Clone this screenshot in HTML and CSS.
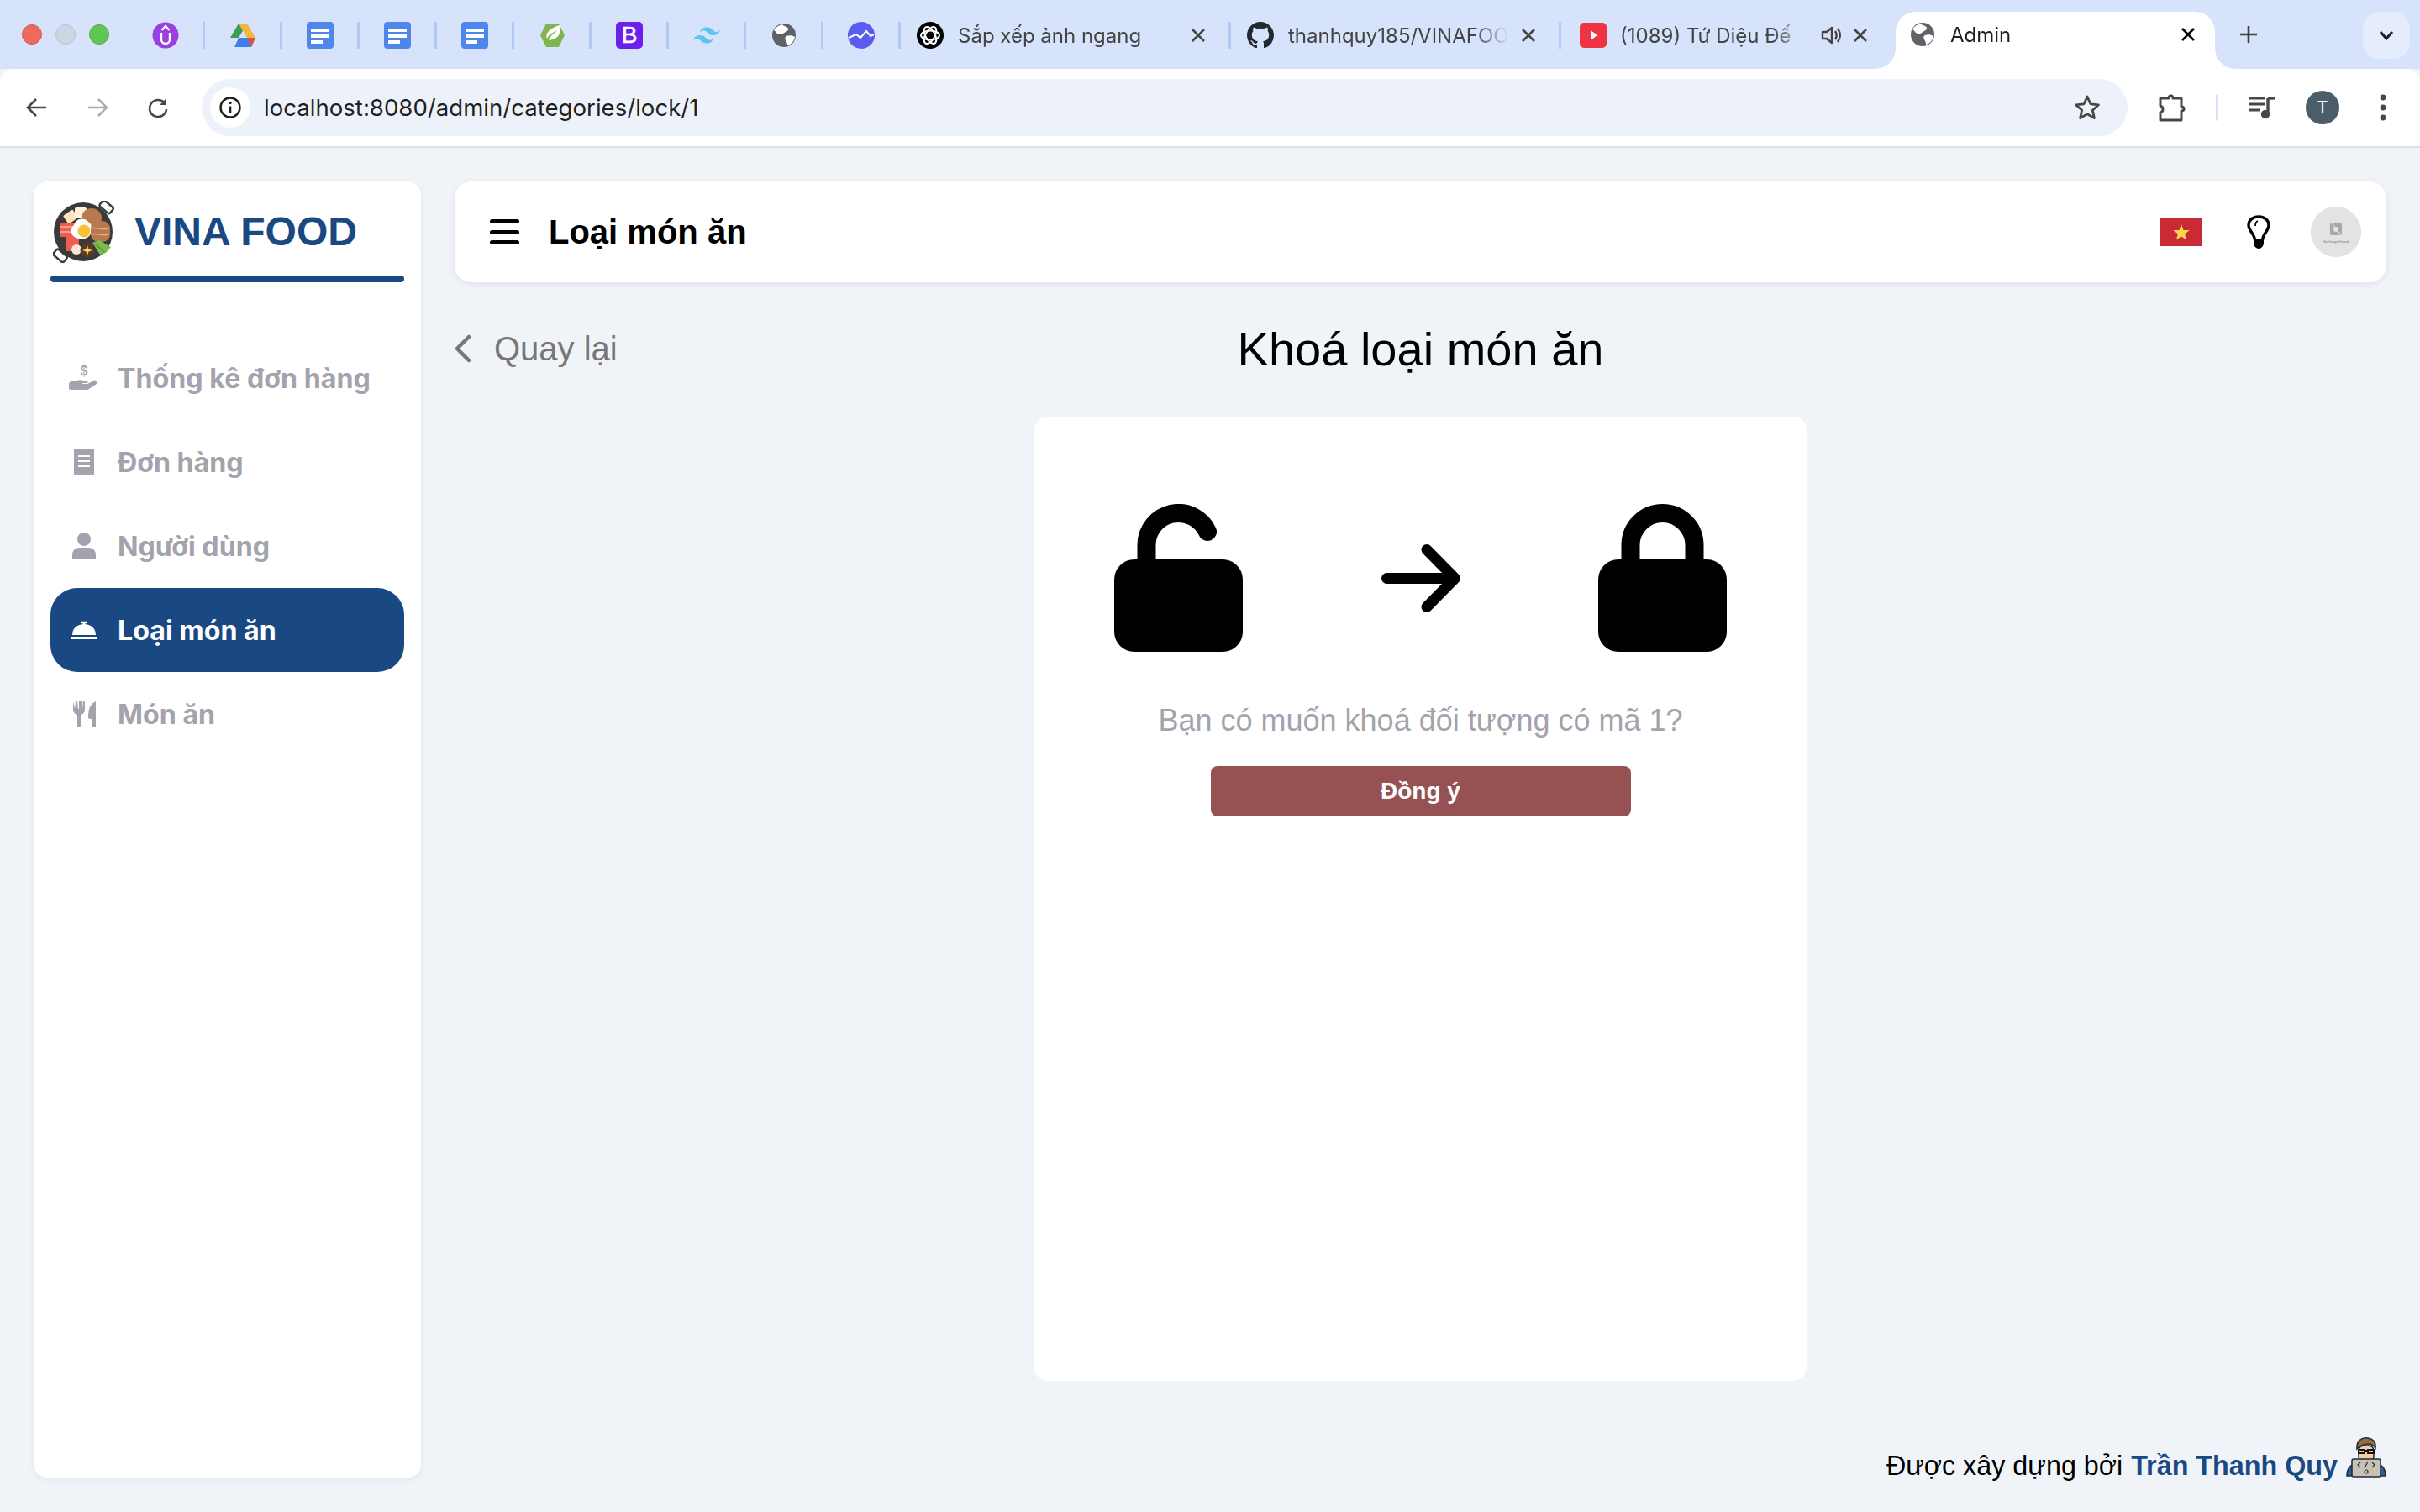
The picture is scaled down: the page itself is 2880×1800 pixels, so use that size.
FILE: index.html
```html
<!DOCTYPE html>
<html lang="vi">
<head>
    <meta charset="UTF-8">
    <meta name="viewport" content="width=device-width, initial-scale=1.0">
    <title>Admin</title>
    <link rel="stylesheet" href="styles.css">
</head>
<body>
    <svg class="defs" width="0" height="0">
        <symbol id="doc" viewBox="0 0 32 32">
            <rect width="32" height="32" rx="4" fill="#4f86ec"/>
            <rect x="5" y="8" width="22" height="4" fill="#fff"/>
            <rect x="5" y="15" width="22" height="4" fill="#fff"/>
            <rect x="5" y="22" width="14" height="4" fill="#fff"/>
        </symbol>
        <symbol id="globe" viewBox="0 0 32 32">
            <circle cx="16" cy="16" r="14" fill="#5f6368"/>
            <path d="M14 3c2 3 6 2 7 5s-4 4-6 6-7 1-8-1-3-3-3-3c2-4 6-6 10-7zM19 17c3-1 7-1 10 1-1 5-4 9-9 10 0-3-1-4-2-6s-1-4 1-5z" fill="#fff"/>
        </symbol>
        <symbol id="close" viewBox="0 0 20 20">
            <path d="M3 3l14 14M17 3L3 17" fill="none" stroke="currentColor" stroke-width="2.6"/>
        </symbol>
    </svg>

    <div class="browser">
        <div class="tabstrip">
            <div class="traffic">
                <span class="light light-red"></span>
                <span class="light light-gray"></span>
                <span class="light light-green"></span>
            </div>
            <div class="pin">
                <svg class="favicon" viewBox="0 0 32 32"><circle cx="16" cy="16" r="15.500" fill="#9a3fe0"/><path d="M11 13v8a5 5 0 0 0 10 0v-8" fill="none" stroke="#fff" stroke-width="2.400"/><path d="M11.500 10L16 5l4.500 5" fill="none" stroke="#fff" stroke-width="2.400"/></svg>
            </div>
            <div class="pin">
                <svg class="favicon" viewBox="0 0 32 32"><path d="M11 2h10L11 19H1z" fill="#3b9b57"/><path d="M21 2l10 17H21L11 2z" fill="#f4b63d"/><path d="M6 30l5-11h20l-5 11z" fill="#3f7fe8"/><path d="M26 30l-5-11h10z" fill="#dd5340"/></svg>
            </div>
            <div class="pin"><svg class="favicon"><use href="#doc"/></svg></div>
            <div class="pin"><svg class="favicon"><use href="#doc"/></svg></div>
            <div class="pin"><svg class="favicon"><use href="#doc"/></svg></div>
            <div class="pin">
                <svg class="favicon" viewBox="0 0 32 32"><path d="M9 2h15l7 14-7 14H9L2 16z" fill="#7fb550"/><path d="M25 4c2 9-1 17-13 18 2-6 7-8 10-12-5 3-10 5-12 10C7 14 14 7 25 4z" fill="#fff"/></svg>
            </div>
            <div class="pin">
                <svg class="favicon" viewBox="0 0 32 32"><rect width="32" height="32" rx="5" fill="#6a20ec"/><text x="16" y="25" class="favicon-b">B</text></svg>
            </div>
            <div class="pin">
                <svg class="favicon" viewBox="2 2 20 20"><path d="M12 6c-2.670 0-4.330 1.330-5 4 1-1.330 2.170-1.830 3.500-1.500.761.190 1.305.742 1.906 1.351C13.387 10.848 14.522 12 17 12c2.670 0 4.330-1.330 5-4-1 1.330-2.170 1.830-3.500 1.500-.761-.190-1.305-.742-1.906-1.351C15.613 7.152 14.478 6 12 6zM7 12c-2.670 0-4.330 1.330-5 4 1-1.330 2.170-1.830 3.500-1.500.761.190 1.305.743 1.906 1.351C8.387 16.848 9.522 18 12 18c2.670 0 4.330-1.330 5-4-1 1.330-2.170 1.830-3.500 1.500-.761-.190-1.305-.742-1.906-1.351C10.613 13.152 9.478 12 7 12z" fill="#5cc3f3"/></svg>
            </div>
            <div class="pin"><svg class="favicon"><use href="#globe"/></svg></div>
            <div class="pin">
                <svg class="favicon" viewBox="0 0 32 32"><circle cx="16" cy="16" r="16" fill="#5a5cf0"/><path d="M1 19l9-4 5 4 7-8 5 6 4-2" fill="none" stroke="#fff" stroke-width="2"/></svg>
            </div>

            <div class="tab tab-sep">
                <svg class="favicon" viewBox="0 0 32 32"><circle cx="16" cy="16" r="16"/><g fill="none" stroke="#fff" stroke-width="2"><ellipse cx="16" cy="16" rx="11" ry="5.500"/><ellipse cx="16" cy="16" rx="11" ry="5.500" transform="rotate(60 16 16)"/><ellipse cx="16" cy="16" rx="11" ry="5.500" transform="rotate(120 16 16)"/></g></svg>
                <span class="tab-title">Sắp xếp ảnh ngang</span>
                <svg class="tab-close"><use href="#close"/></svg>
            </div>
            <div class="tab tab-sep">
                <svg class="favicon" viewBox="0 0 16 16"><path fill="#24292f" d="M8 0C3.580 0 0 3.580 0 8c0 3.540 2.290 6.530 5.470 7.590.4.070.55-.17.55-.38v-1.340c-2.230.48-2.700-1.070-2.700-1.070-.36-.92-.89-1.170-.89-1.170-.73-.5.05-.49.05-.49.800.06 1.230.83 1.230.83.710 1.220 1.870.87 2.330.66.070-.52.280-.87.510-1.070-1.780-.2-3.640-.89-3.640-3.950 0-.870.310-1.590.820-2.150-.08-.2-.36-1.020.08-2.120 0 0 .67-.21 2.200.82a7.600 7.600 0 0 1 4 0c1.530-1.040 2.200-.82 2.200-.82.440 1.100.160 1.920.080 2.120.51.560.820 1.270.820 2.150 0 3.070-1.870 3.750-3.650 3.950.290.250.54.730.54 1.480v2.200c0 .210.150.460.550.380A8 8 0 0 0 16 8c0-4.420-3.580-8-8-8z"/></svg>
                <span class="tab-title">thanhquy185/VINAFOOD</span>
                <svg class="tab-close"><use href="#close"/></svg>
            </div>
            <div class="tab tab-yt">
                <svg class="favicon" viewBox="0 0 32 32"><rect y="1" width="32" height="30" rx="5" fill="#ee3344"/><path d="M13 10l8 6-8 6z" fill="#fff"/></svg>
                <span class="tab-title">(1089) Tứ Diệu Đế</span>
                <svg class="tab-sound" viewBox="0 0 26 26"><path d="M3 9v8h5l6 5V4L8 9z" fill="none" stroke="#444" stroke-width="2.400" stroke-linejoin="round"/><path d="M18 8c2 3 2 7 0 10M21 5c3.500 5 3.500 11 0 16" fill="none" stroke="#444" stroke-width="2.400"/></svg>
                <svg class="tab-close"><use href="#close"/></svg>
            </div>
            <div class="tab tab-active">
                <svg class="favicon"><use href="#globe"/></svg>
                <span class="tab-title">Admin</span>
                <svg class="tab-close"><use href="#close"/></svg>
            </div>
            <svg class="newtab" viewBox="0 0 22 22"><path d="M11 1v20M1 11h20" fill="none" stroke="#3c4043" stroke-width="2.600"/></svg>
            <div class="tabmenu">
                <svg viewBox="0 0 18 12" width="18" height="12"><path d="M2 2l7 8 7-8" fill="none" stroke="#1f1f1f" stroke-width="3"/></svg>
            </div>
        </div>

        <div class="toolbar">
            <div class="tool">
                <svg viewBox="0 0 26 26" width="26" height="26"><path d="M24 13H3M12 3L2 13l10 10" fill="none" stroke="#474747" stroke-width="2.600"/></svg>
            </div>
            <div class="tool">
                <svg viewBox="0 0 26 26" width="26" height="26"><path d="M2 13h21M14 3l10 10-10 10" fill="none" stroke="#adadad" stroke-width="2.600"/></svg>
            </div>
            <div class="tool">
                <svg viewBox="0 0 26 26" width="26" height="26"><path d="M21 8a10 10 0 1 0 2 7" fill="none" stroke="#474747" stroke-width="2.600"/><path d="M23 2v8h-8z" fill="#474747"/></svg>
            </div>
            <div class="omnibox">
                <span class="site-info">
                    <svg viewBox="0 0 28 28" width="28" height="28"><circle cx="14" cy="14" r="11.500" fill="none" stroke="#1f1f1f" stroke-width="2.400"/><path d="M14 12.500v8" stroke="#1f1f1f" stroke-width="2.600"/><circle cx="14" cy="8.500" r="1.700" fill="#1f1f1f"/></svg>
                </span>
                <span class="url">localhost:8080/admin/categories/lock/1</span>
                <svg class="star" viewBox="0 0 32 32"><path d="M16 3l3.900 8.800 9.600 1-7.200 6.400 2.100 9.400L16 23.700l-8.400 4.900 2.100-9.400L2.500 12.800l9.600-1z" fill="none" stroke="#474747" stroke-width="2.800" stroke-linejoin="round"/></svg>
            </div>
            <div class="tool tool-ext">
                <svg viewBox="0 0 34 34" width="34" height="34"><path d="M3 6h10c0-4 5-4 5 0h10v10c4 0 4 5 0 5v11H3v-9c4-1 4-7 0-8z" fill="none" stroke="#474747" stroke-width="3" stroke-linejoin="round"/></svg>
            </div>
            <span class="tool-sep"></span>
            <div class="tool">
                <svg viewBox="0 0 32 32" width="32" height="32"><path d="M1 5h19M1 12h19M1 19h12" stroke="#474747" stroke-width="3"/><path d="M23 5v19" stroke="#474747" stroke-width="3.400"/><path d="M23 5h8" stroke="#474747" stroke-width="3.400"/><circle cx="20" cy="24" r="5.200" fill="#474747"/></svg>
            </div>
            <div class="tool"><span class="profile">T</span></div>
            <div class="tool">
                <svg viewBox="0 0 8 32" width="8" height="32"><circle cx="4" cy="4" r="3.400" fill="#474747"/><circle cx="4" cy="16" r="3.400" fill="#474747"/><circle cx="4" cy="28" r="3.400" fill="#474747"/></svg>
            </div>
        </div>
    </div>

    <div class="page">
        <aside class="sidebar">
            <div class="brand">
                <svg class="brand-logo" viewBox="0 0 74 74">
                    <g fill="#fff" stroke="#3a3a3a" stroke-width="2.500">
                        <rect x="56" y="3" width="16" height="9" rx="2.500" transform="rotate(40 64 7)"/>
                        <rect x="1" y="61" width="16" height="9" rx="2.500" transform="rotate(40 9 65)"/>
                    </g>
                    <circle cx="36" cy="37" r="35" fill="#3a3a3a"/>
                    <rect x="14" y="13" width="14" height="12" rx="2" fill="#fde3bd" transform="rotate(-35 21 19)"/>
                    <rect x="26" y="8" width="14" height="13" rx="2" fill="#fff0d8"/>
                    <ellipse cx="46" cy="20" rx="12" ry="11" fill="#b9794f"/>
                    <rect x="8" y="27" width="19" height="16" rx="2" fill="#ef5d50"/>
                    <rect x="16" y="42" width="15" height="18" rx="1" fill="#ef5d50"/>
                    <path d="M9 31h17M9 37h17" stroke="#fbb3a6" stroke-width="1.500"/>
                    <path d="M27 44c-7-3-6-12-2-15 2-8 12-10 17-4 6 3 5 13 2 16-5 6-12 5-17 3z" fill="#fff"/>
                    <circle cx="37" cy="36" r="7.500" fill="#f7c332"/>
                    <rect x="45" y="24" width="23" height="25" rx="9" fill="#b9794f"/>
                    <path d="M47 33c5-2 8 2 19 0M47 40c5-2 8 2 19 0" fill="none" stroke="#e3b999" stroke-width="1.500"/>
                    <path d="M47 50l8-3 14 8-6 7-7 2z" fill="#7dbb4d"/>
                    <path d="M50 51l11 10" stroke="#4f9437" stroke-width="1.500"/>
                    <circle cx="28" cy="58" r="6" fill="#fde6d5"/>
                    <circle cx="41" cy="59" r="8.500" fill="#5a3a25"/>
                    <path d="M41 53l1.500 4.500L47 59l-4.500 1.500L41 65l-1.500-4.500L35 59l4.500-1.500z" fill="#f8d65c"/>
                </svg>
                <span class="brand-name">VINA FOOD</span>
            </div>
            <div class="brand-line"></div>
            <nav class="menu">
                <a class="menu-item">
                    <span class="menu-icon">
                        <svg viewBox="0 0 36 32" width="36" height="32"><text x="18" y="13" class="dollar">$</text><path d="M0 23c0-2 2-3 4-3h5c2-2 5-2 7-1h5c2 0 2 3 0 3h-5v1h6l8-4c3-1 5 2 3 4l-9 6c-1 1-2 1-3 1H3c-2 0-3-1-3-2z" fill="currentColor"/></svg>
                    </span>
                    Thống kê đơn hàng
                </a>
                <a class="menu-item">
                    <span class="menu-icon">
                        <svg viewBox="0 0 24 32" width="24" height="32"><path d="M0 0l3 1.500L6 0l3 1.500L12 0l3 1.500L18 0l3 1.500L24 0v32l-3-1.500-3 1.500-3-1.500-3 1.500-3-1.500L6 32l-3-1.500L0 32z" fill="currentColor"/><path d="M5 9h14M5 15h14M5 21h14" stroke="#fff" stroke-width="2"/></svg>
                    </span>
                    Đơn hàng
                </a>
                <a class="menu-item">
                    <span class="menu-icon">
                        <svg viewBox="0 0 28 32" width="28" height="32"><circle cx="14" cy="8" r="8" fill="currentColor"/><path d="M0 32v-5c0-6 4-9 9-9h10c5 0 9 3 9 9v5z" fill="currentColor"/></svg>
                    </span>
                    Người dùng
                </a>
                <a class="menu-item menu-item-active">
                    <span class="menu-icon">
                        <svg viewBox="0 0 32 24" width="32" height="24"><path d="M12 3h8M16 3v3" stroke="currentColor" stroke-width="2.500"/><path d="M2 18C2 10 8 5 16 5s14 5 14 13z" fill="currentColor"/><rect y="20" width="32" height="3" rx="1" fill="currentColor"/></svg>
                    </span>
                    Loại món ăn
                </a>
                <a class="menu-item">
                    <span class="menu-icon">
                        <svg viewBox="0 0 28 32" width="28" height="32"><path d="M1 1v10c0 3 2 5 5 6v13c0 2 4 2 4 0V17c3-1 5-3 5-6V1h-2l-1 9h-1V1h-3v9H7L6 1H4L3 10z" fill="currentColor"/><path d="M28 1v30c0 1-4 1-4 0v-9h-3c-1 0-2-1-2-2 0-9 2-16 9-19z" fill="currentColor"/></svg>
                    </span>
                    Món ăn
                </a>
            </nav>
        </aside>

        <main class="main">
            <header class="topbar">
                <div class="hamburger"><span></span><span></span><span></span></div>
                <h2 class="topbar-title">Loại món ăn</h2>
                <svg class="flag" viewBox="0 0 50 34"><rect width="50" height="34" fill="#c92a33"/><path d="M25 8l2.500 7 7.300.1-5.800 4.500 2.100 7-6.100-4.200-6.100 4.200 2.100-7-5.800-4.500 7.300-.1z" fill="#f8d94a"/></svg>
                <svg class="bulb" viewBox="0 0 28 40"><path d="M9.500 30C9 22 2 19 2 12 2 5.500 7.500 2 14 2s12 3.500 12 10c0 7-7 10-7.500 18z" fill="none" stroke="#000" stroke-width="3.400" stroke-linejoin="round"/><path d="M8 31h12v2c0 4-3 7-6 7s-6-3-6-7z" fill="#000"/><path d="M13 7c-2 1-3 3-3 6" fill="none" stroke="#000" stroke-width="1.800"/></svg>
                <div class="user-avatar">
                    <svg viewBox="0 0 16 18" width="16" height="18"><rect x="1" y="2" width="14" height="15" rx="2" fill="#a8a8a8"/><circle cx="8" cy="10" r="3" fill="#e3e3e3"/><path d="M2 1l12 16" stroke="#e3e3e3" stroke-width="1.200"/></svg>
                    <span class="user-avatar-text">No Image Found</span>
                </div>
            </header>

            <div class="title-row">
                <a class="back">
                    <svg viewBox="0 0 20 34" width="20" height="34"><path d="M17 3L3 17l14 14" fill="none" stroke="#777" stroke-width="4.500" stroke-linecap="round" stroke-linejoin="round"/></svg>
                    <span>Quay lại</span>
                </a>
                <h1 class="page-title">Khoá loại món ăn</h1>
                <span></span>
            </div>

            <section class="card">
                <div class="lock-row">
                    <svg class="lock" viewBox="0 0 153 176"><path d="M38.500 72V49a38 38 0 0 1 72.500-16" fill="none" stroke="#000" stroke-width="22" stroke-linecap="round"/><rect y="66" width="153" height="110" rx="24"/></svg>
                    <svg class="arrow" viewBox="0 0 94 81"><path d="M6.500 40.500H87M54 6.500l33.500 34L54 74.500" fill="none" stroke="#000" stroke-width="13" stroke-linecap="round" stroke-linejoin="round"/></svg>
                    <svg class="lock" viewBox="0 0 153 176"><path d="M38.500 72V49a38 38 0 0 1 76 0v23" fill="none" stroke="#000" stroke-width="22"/><rect y="66" width="153" height="110" rx="24"/></svg>
                </div>
                <p class="question">Bạn có muốn khoá đối tượng có mã 1?</p>
                <button class="confirm">Đồng ý</button>
            </section>

            <footer class="credit">
                <span>Được xây dựng bởi</span>
                <strong>Trần Thanh Quy</strong>
                <svg class="credit-icon" viewBox="0 0 48 48">
                    <path d="M1 46c0-10 5-14 13-15h20c8 1 13 5 13 15z" fill="#2f5d95" stroke="#1d2b3a" stroke-width="1.500"/>
                    <rect x="15" y="10" width="18" height="19" rx="6" fill="#f3cba6" stroke="#1d2b3a" stroke-width="1.500"/>
                    <path d="M13 14C12 4 19 0 26 1c6 1 10 4 9 12-2-3-5-5-9-5-5 0-9 2-13 6z" fill="#9a6b3f" stroke="#1d2b3a" stroke-width="1.500"/>
                    <path d="M15 15h7v4h-7zM26 15h7v4h-7zM22 16h4" fill="none" stroke="#111" stroke-width="1.800"/>
                    <rect x="7" y="26" width="34" height="21" rx="2" fill="#c9c2b4" stroke="#1d2b3a" stroke-width="1.500"/>
                    <path d="M17 30l-3 3 3 3M31 30l3 3-3 3M26 29l-4 8" fill="none" stroke="#1d2b3a" stroke-width="1.200"/>
                    <circle cx="24" cy="41" r="2" fill="none" stroke="#1d2b3a" stroke-width="1.200"/>
                </svg>
            </footer>
        </main>
    </div>
</body>
</html>
```

FILE: styles.css
```css
* {
    margin: 0;
    padding: 0;
    box-sizing: border-box;
}
body {
    display: flex;
    flex-direction: column;
    height: 100vh;
    overflow: hidden;
    background: #f0f4f9;
    font-family: "Liberation Sans", Arial, sans-serif;
    color: #000;
}
.defs {
    position: absolute;
}

/* browser chrome */
.tabstrip {
    display: flex;
    align-items: flex-end;
    height: 82px;
    background: #d6e3fa;
    font-family: Inter, "Noto Sans", sans-serif;
}
.traffic {
    display: flex;
    align-items: center;
    gap: 16px;
    width: 152px;
    height: 82px;
    padding-left: 26px;
}
.light {
    width: 24px;
    height: 24px;
    border-radius: 50%;
}
.light-red { background: #ed6a5e; border: 1px solid #d8574c; }
.light-gray { background: #ced6e3; border: 1px solid #b9c1ce; }
.light-green { background: #61c554; border: 1px solid #53ad47; }
.pin {
    display: flex;
    align-items: center;
    justify-content: center;
    width: 92px;
    height: 32px;
    margin-bottom: 24px;
    border-right: 3px solid #b2c9f3;
}
.favicon {
    flex: none;
    width: 32px;
    height: 32px;
}
.favicon-b {
    font-family: "Liberation Sans", sans-serif;
    font-size: 28px;
    font-weight: 400;
    fill: #fff;
    stroke: #fff;
    stroke-width: 0.6px;
    text-anchor: middle;
}
.tab {
    position: relative;
    display: flex;
    align-items: center;
    height: 32px;
    margin-bottom: 24px;
    padding-left: 19px;
    color: #444;
    font-size: 24px;
}
.tab-sep {
    width: 393px;
    padding-right: 26px;
    border-right: 3px solid #b2c9f3;
}
.tab-yt {
    width: 398px;
    padding-left: 22px;
    padding-right: 32px;
}
.tab-title {
    flex: 1;
    min-width: 0;
    margin-left: 17px;
    white-space: nowrap;
    overflow: hidden;
    -webkit-mask-image: linear-gradient(to right, #000 calc(100% - 40px), transparent);
    mask-image: linear-gradient(to right, #000 calc(100% - 40px), transparent);
}
.tab-yt .tab-title {
    margin-left: 16px;
}
.tab-close {
    flex: none;
    width: 20px;
    height: 20px;
    margin-left: 14px;
    color: #444;
}
.tab-sound {
    flex: none;
    width: 26px;
    height: 26px;
    margin-left: 16px;
}
.tab-yt .tab-close {
    margin-left: 12px;
}
.tab-active {
    width: 380px;
    height: 68px;
    margin-bottom: 0;
    padding: 0 22px 14px 16px;
    background: #fff;
    border-radius: 24px 24px 0 0;
    color: #1f1f1f;
}
.tab-active .tab-close {
    color: #000;
}
.tab-active::before,
.tab-active::after {
    content: "";
    position: absolute;
    bottom: 0;
    width: 24px;
    height: 24px;
}
.tab-active::before {
    left: -24px;
    background: radial-gradient(circle at 0 0, transparent 23.5px, #fff 24px);
}
.tab-active::after {
    right: -24px;
    background: radial-gradient(circle at 100% 0, transparent 23.5px, #fff 24px);
}
.newtab {
    width: 22px;
    height: 22px;
    margin: 0 0 30px 29px;
}
.tabmenu {
    display: flex;
    align-items: center;
    justify-content: center;
    width: 56px;
    height: 56px;
    margin: 0 0 12px 125px;
    background: #e5edfc;
    border-radius: 20px;
}
.toolbar {
    display: flex;
    align-items: center;
    height: 94px;
    padding: 0 8px;
    background: #fff;
    border-bottom: 2px solid #e1e1e1;
    border-radius: 16px 16px 0 0;
}
.tool {
    display: flex;
    flex: none;
    align-items: center;
    justify-content: center;
    width: 72px;
    height: 72px;
}
.tool-ext {
    margin-left: 17px;
}
.tool-sep {
    flex: none;
    width: 3px;
    height: 32px;
    margin: 0 16px;
    background: #d6e3fa;
    border-radius: 2px;
}
.omnibox {
    display: flex;
    flex: 1;
    align-items: center;
    height: 68px;
    margin-left: 16px;
    padding: 0 32px 0 10px;
    background: #edf2fa;
    border-radius: 34px;
}
.site-info {
    display: flex;
    align-items: center;
    justify-content: center;
    width: 48px;
    height: 48px;
    background: #fff;
    border-radius: 50%;
}
.url {
    flex: 1;
    margin-left: 16px;
    color: #1f1f1f;
    font-family: Inter, "Noto Sans", sans-serif;
    font-size: 27.6px;
}
.star {
    width: 32px;
    height: 32px;
}
.profile {
    display: flex;
    align-items: center;
    justify-content: center;
    width: 40px;
    height: 40px;
    background: #4a5d68;
    border-radius: 50%;
    color: #fff;
    font-family: Inter, "Noto Sans", sans-serif;
    font-size: 20px;
}

/* page */
.page {
    display: flex;
    flex: 1;
    gap: 40px;
    min-height: 0;
    padding: 40px 40px 41px;
}
.sidebar {
    flex: none;
    width: 461px;
    padding: 23px 20px 0;
    background: #fff;
    border-radius: 16px;
    box-shadow: 0 2px 8px rgba(0, 0, 0, 0.06);
}
.brand {
    display: flex;
    align-items: center;
    gap: 23px;
    padding-left: 3px;
}
.brand-logo {
    width: 74px;
    height: 74px;
}
.brand-name {
    margin-top: -2px;
    color: #1a4882;
    font-size: 48px;
    font-weight: 700;
}
.brand-line {
    height: 8px;
    margin-top: 15px;
    background: #1a4882;
    border-radius: 4px;
}
.menu {
    margin-top: 64px;
}
.menu-item {
    display: flex;
    align-items: center;
    gap: 16px;
    height: 100px;
    padding-left: 16px;
    color: #a3a3ae;
    font-family: Inter, "Noto Sans", sans-serif;
    font-size: 32.2px;
    font-weight: 700;
}
.menu-item-active {
    background: #1a4882;
    border-radius: 32px;
    color: #fff;
}
.menu-icon {
    display: flex;
    align-items: center;
    justify-content: center;
    width: 48px;
}
.dollar {
    font-family: "Liberation Sans", sans-serif;
    font-size: 16px;
    font-weight: 700;
    fill: currentColor;
    text-anchor: middle;
}
.main {
    display: flex;
    flex: 1;
    flex-direction: column;
    min-width: 0;
}
.topbar {
    display: flex;
    flex: none;
    align-items: center;
    height: 120px;
    padding: 0 30px 0 42px;
    background: #fff;
    border-radius: 20px;
    box-shadow: 0 2px 8px rgba(0, 0, 0, 0.08);
}
.hamburger {
    display: flex;
    flex-direction: column;
    gap: 7.5px;
    width: 35px;
}
.hamburger span {
    height: 5px;
    background: #000;
    border-radius: 3px;
}
.topbar-title {
    flex: 1;
    margin-left: 35px;
    font-size: 40px;
    font-weight: 700;
}
.flag {
    width: 50px;
    height: 34px;
}
.bulb {
    width: 28px;
    height: 40px;
    margin: 0 48px 0 53px;
}
.user-avatar {
    display: flex;
    flex-direction: column;
    align-items: center;
    justify-content: center;
    width: 60px;
    height: 60px;
    background: #e3e3e3;
    border-radius: 50%;
}
.user-avatar-text {
    color: #777;
    font-size: 4px;
    margin-top: 4px;
}
.title-row {
    display: grid;
    flex: none;
    grid-template-columns: 1fr auto 1fr;
    align-items: center;
    height: 70px;
    margin-top: 44px;
}
.back {
    display: flex;
    align-items: center;
    gap: 27px;
    color: #777;
    font-size: 40px;
}
.page-title {
    font-size: 56px;
    font-weight: 400;
}
.card {
    display: flex;
    flex: none;
    flex-direction: column;
    align-items: center;
    align-self: center;
    width: 919px;
    height: 1148px;
    margin-top: 46px;
    padding: 104px 95px 0;
    background: #fff;
    border-radius: 16px;
}
.lock-row {
    display: flex;
    align-items: center;
    justify-content: space-between;
    width: 100%;
}
.lock {
    width: 153px;
    height: 176px;
}
.arrow {
    width: 94px;
    height: 81px;
}
.question {
    margin-top: 57px;
    color: #a3a3ae;
    font-size: 36px;
    line-height: 50px;
}
.confirm {
    width: 500px;
    height: 60px;
    margin-top: 29px;
    background: #965252;
    border: none;
    border-radius: 8px;
    color: #fff;
    font-family: inherit;
    font-size: 28px;
    font-weight: 700;
}
.credit {
    display: flex;
    align-items: flex-end;
    justify-content: flex-end;
    gap: 10px;
    margin-top: auto;
    font-size: 32.3px;
    line-height: 28px;
}
.credit strong {
    color: #1a4882;
}
.credit-icon {
    width: 48px;
    height: 48px;
}
```
